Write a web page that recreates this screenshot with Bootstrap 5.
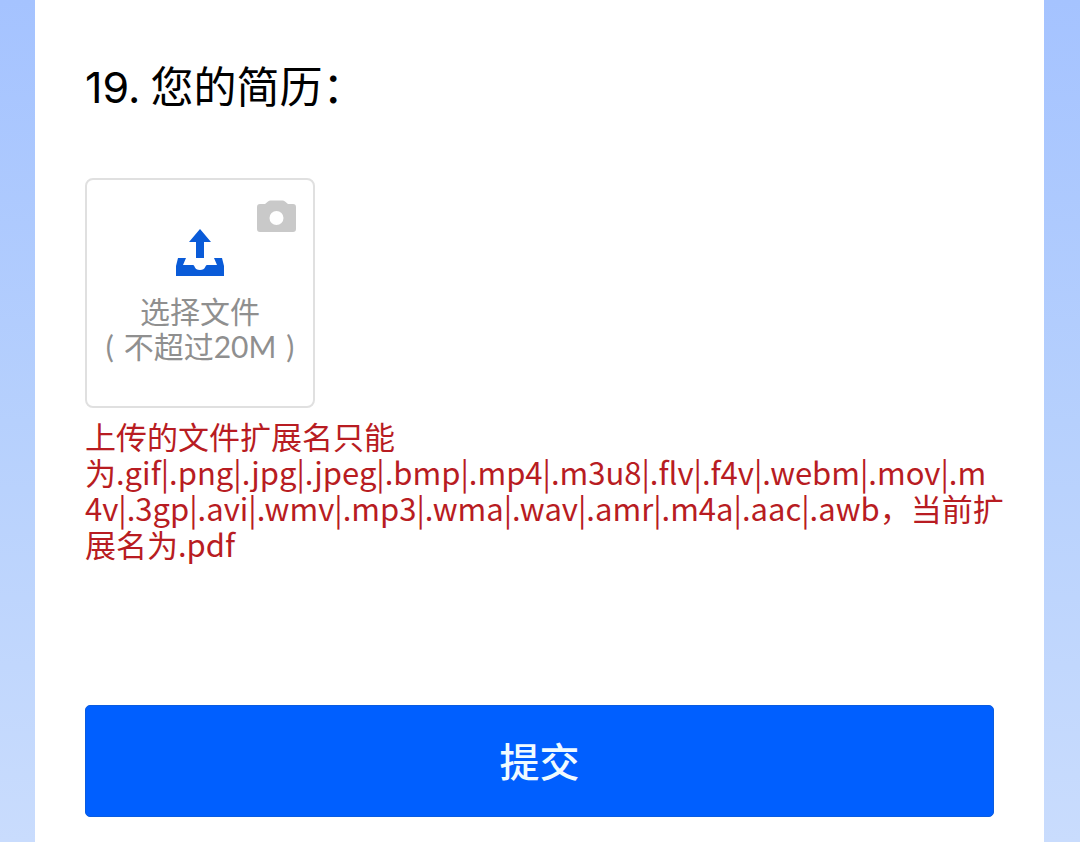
<!DOCTYPE html>
<html lang="zh-CN">
<head>
<meta charset="utf-8">
<meta name="viewport" content="width=device-width, initial-scale=1">
<title>您的简历</title>
<link href="https://cdn.jsdelivr.net/npm/bootstrap@5.3.0/dist/css/bootstrap.min.css" rel="stylesheet">
<style>
  body {
    font-family: "Noto Sans CJK SC", sans-serif;
    background: linear-gradient(#a5c3ff, #b6d0fd 50%, #c9dcfd);
    color: #000;
  }
  .page-gutter { padding: 0 36px 0 35px; }
  .sheet { padding: 52px 50px 24px; }
  .question { font-size: 43px; line-height: 64px; margin-bottom: 59px; font-weight: 400; gap: 10px; }
  .question-number { font-family: Inter, sans-serif; font-size: 43px; }
  .upload-box {
    width: 230px;
    height: 230px;
    border: 2px solid #e0e0e0;
    border-radius: 8px;
    color: #8f8f8f;
    font-size: 30px;
    line-height: 36px;
    padding-top: 49px;
    cursor: pointer;
  }
  .upload-box .camera { top: 20px; right: 17px; }
  .upload-label { margin-top: 15px; }
  .upload-hint { gap: 10px; font-family: Lato, "Noto Sans CJK SC", sans-serif; }
  .error-text {
    color: #b81c22;
    font-size: 31px;
    line-height: 36px;
    margin: 10px 0 143px;
  }
  .submit-btn {
    --bs-btn-bg: #005fff;
    --bs-btn-border-color: #0a5ce0;
    --bs-btn-color: #f0fbff;
    --bs-btn-hover-bg: #0054e0;
    --bs-btn-hover-color: #fff;
    --bs-btn-border-radius: 5px;
    --bs-btn-font-weight: 500;
    font-size: 40px;
    line-height: 60px;
    padding: 24px 12px 26px;
  }
</style>
</head>
<body>
<div class="page-gutter">
  <main class="sheet bg-white min-vh-100">
    <form>
      <h1 class="question d-flex align-items-baseline"><span class="question-number">19.</span><span>您的简历：</span></h1>

      <input type="file" id="resume" class="visually-hidden">
      <label for="resume" class="upload-box position-relative d-flex flex-column align-items-center">
        <svg class="camera position-absolute" width="39" height="33" viewBox="0 0 39 33" aria-hidden="true">
          <path fill="#c9c9c9" fill-rule="evenodd" d="M3 4H8L11 1.500Q12 .5 13.500 .5H25.500Q27 .5 28 1.500L31 4H36Q39 4 39 7V29Q39 32 36 32H3Q0 32 0 29V7Q0 4 3 4ZM19.500 11a7 7 0 1 0 0 14a7 7 0 1 0 0-14Z"/>
        </svg>
        <svg width="48" height="48" viewBox="0 0 48 48" aria-hidden="true">
          <path fill="#0a5bd8" d="M24 0L35 13H28V29H20V13H13ZM2 29H10L7 36H17C19 36 18 41 24 41C30 41 29 36 31 36H41L38 29H46L48 37V47H0V37Z"/>
        </svg>
        <span class="upload-label">选择文件</span>
        <span class="upload-hint d-flex text-nowrap"><span>(</span><span>不超过20M</span><span>)</span></span>
      </label>

      <p class="error-text text-nowrap">上传的文件扩展名只能<br>为.gif|.png|.jpg|.jpeg|.bmp|.mp4|.m3u8|.flv|.f4v|.webm|.mov|.m<br>4v|.3gp|.avi|.wmv|.mp3|.wma|.wav|.amr|.m4a|.aac|.awb，当前扩<br>展名为.pdf</p>

      <button type="submit" class="btn submit-btn w-100">提交</button>
    </form>
  </main>
</div>
<script src="https://cdn.jsdelivr.net/npm/bootstrap@5.3.0/dist/js/bootstrap.bundle.min.js"></script>
</body>
</html>
